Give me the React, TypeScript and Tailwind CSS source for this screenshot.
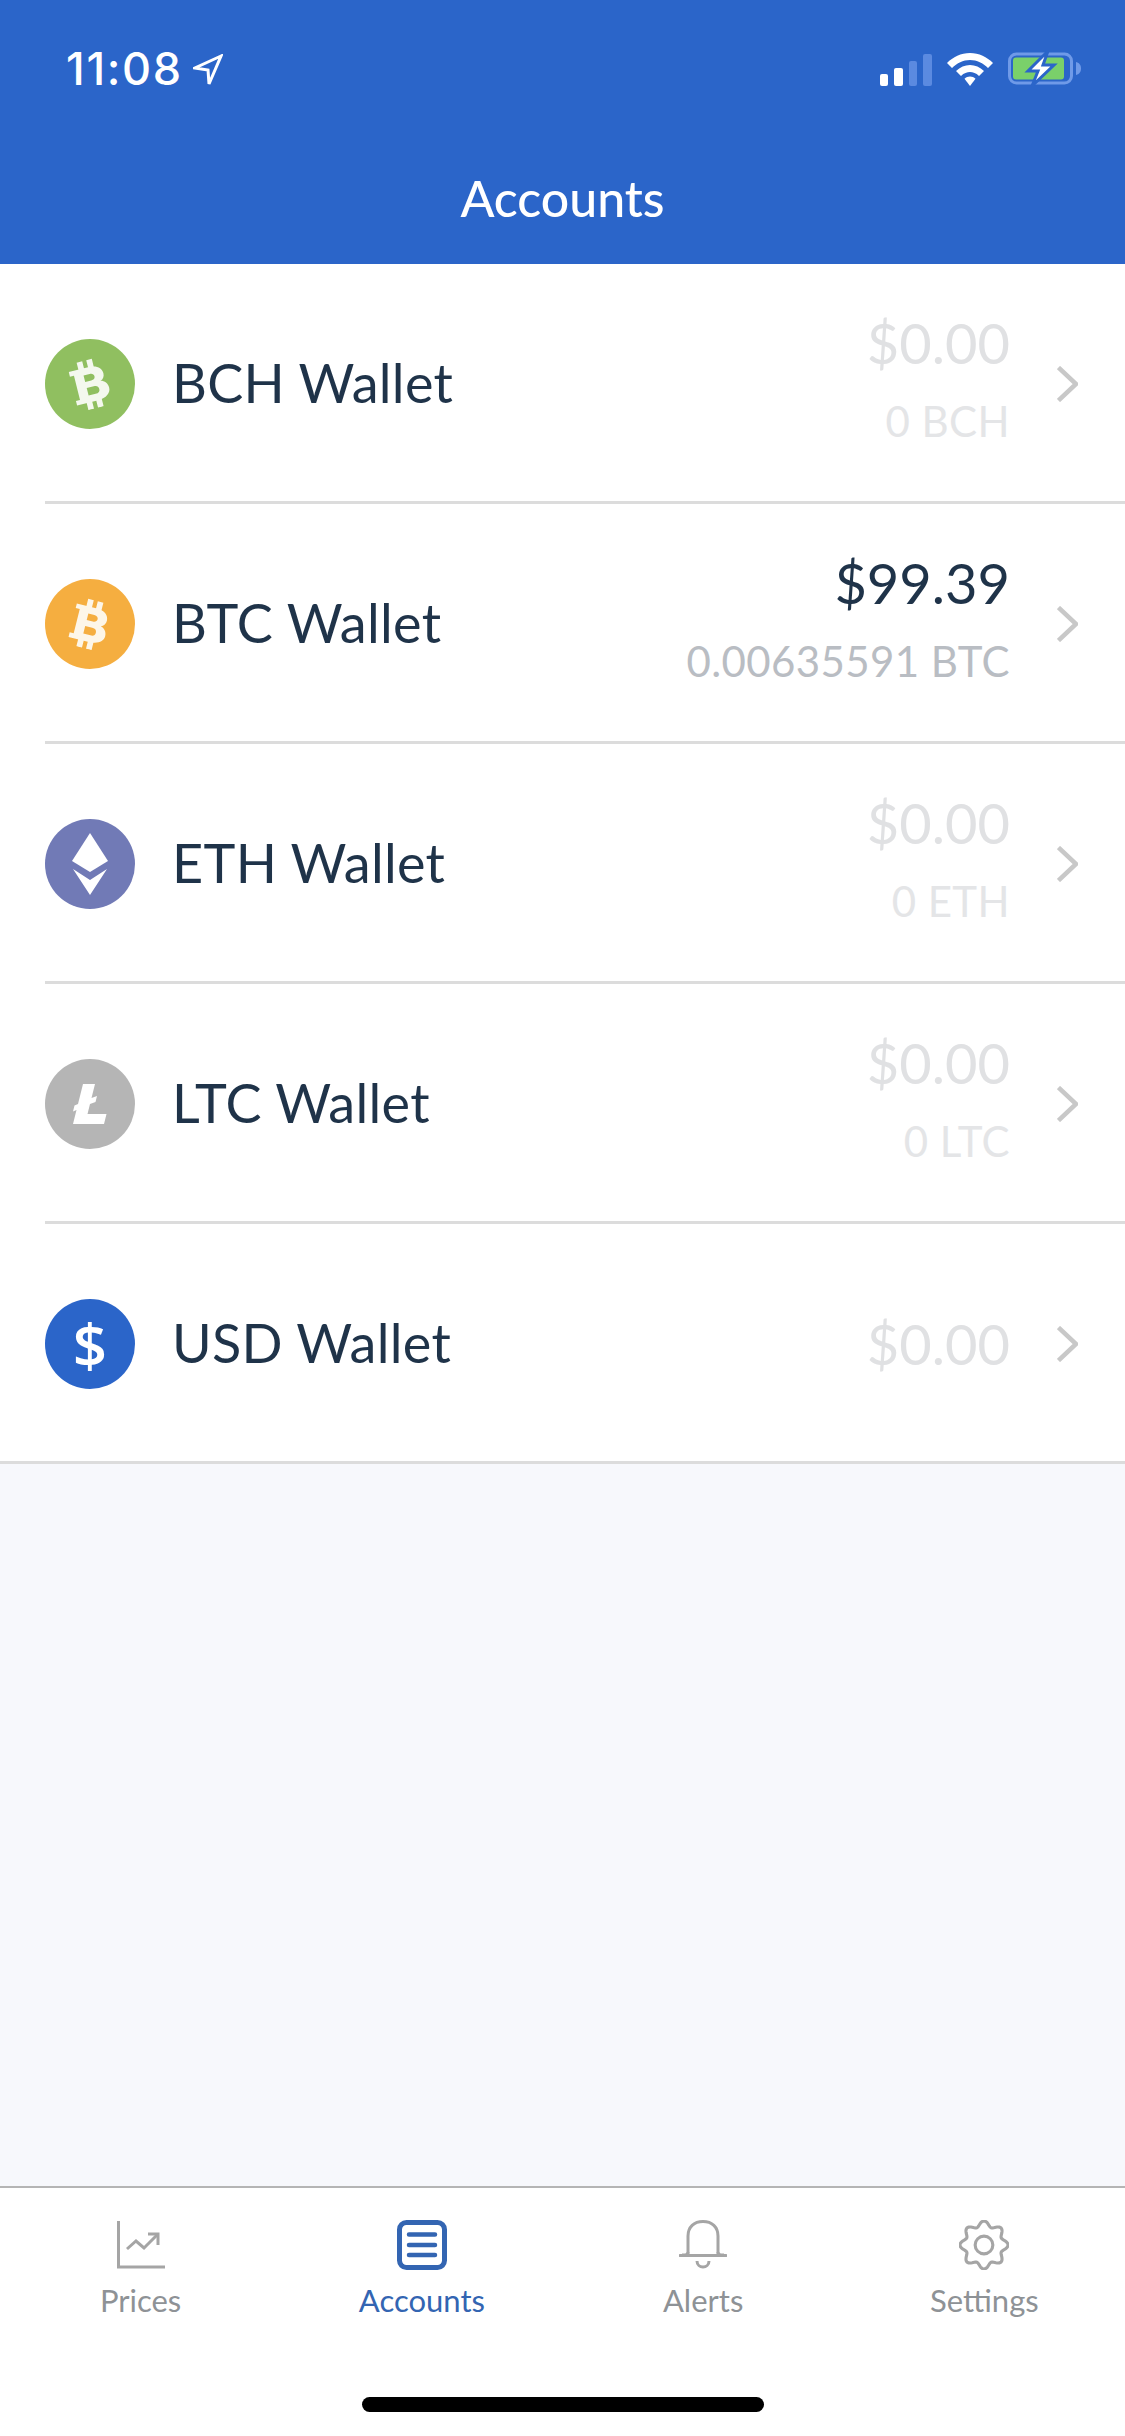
const gearPath = (() => {
  // scalloped outline with 8 lobes
  const pts: string[] = [];
  for (let i = 0; i < 160; i++) {
    const a = (i / 160) * Math.PI * 2;
    const r = 20.5 + 2.6 * Math.cos(8 * a);
    const x = 24 + r * Math.sin(a);
    const y = 24 - r * Math.cos(a);
    pts.push(`${i === 0 ? 'M' : 'L'}${x.toFixed(2)} ${y.toFixed(2)}`);
  }
  return pts.join(' ') + ' Z';
})();

const wallets = [
  { name: 'BCH Wallet', fiat: '$0.00', crypto: '0 BCH', color: 'bg-[#90bf60]', icon: 'bch', active: false },
  { name: 'BTC Wallet', fiat: '$99.39', crypto: '0.00635591 BTC', color: 'bg-[#f5ae40]', icon: 'btc', active: true },
  { name: 'ETH Wallet', fiat: '$0.00', crypto: '0 ETH', color: 'bg-[#717ab6]', icon: 'eth', active: false },
  { name: 'LTC Wallet', fiat: '$0.00', crypto: '0 LTC', color: 'bg-[#b5b5b5]', icon: 'ltc', active: false },
  { name: 'USD Wallet', fiat: '$0.00', crypto: '', color: 'bg-[#2b65c9]', icon: 'usd', active: false },
];

function BitcoinMark({ className }: { className: string }) {
  return (
    <svg className={className} width="38" height="50" viewBox="0 0 36 48" fill="currentColor">
      <path
        fillRule="evenodd"
        d="M1 8 H21 C28.500 8 33 12 33 17 C33 20 31.500 22.500 28.500 23.500 C32.500 24.500 35 27.500 35 32 C35 37 30 41 22 41 H1 V36.500 H5 V12.500 H1 Z M14 14.500 V21 H20 C22.500 21 24 19.800 24 17.800 C24 15.800 22.500 14.500 20 14.500 Z M14 27 V34.500 H21 C24 34.500 25.500 33.300 25.500 30.800 C25.500 28.300 24 27 21 27 Z"
      />
      <path d="M10.500 1 H16 V9 H10.500 Z M20 1 H25.500 V9 H20 Z M10.500 40 H16 V48 H10.500 Z M20 40 H25.500 V48 H20 Z" />
    </svg>
  );
}

function CoinIcon({ icon, color }: { icon: string; color: string }) {
  return (
    <div className={`w-[90px] h-[90px] rounded-full flex items-center justify-center shrink-0 text-white ${color}`}>
      {icon === 'bch' && <BitcoinMark className="-rotate-[14deg] text-[#f4f8ee]" />}
      {icon === 'btc' && <BitcoinMark className="rotate-[14deg] text-[#fdf6e8]" />}
      {icon === 'eth' && (
        <svg width="36" height="62" viewBox="0 0 36 62" fill="white">
          <path d="M18 0 L36 28 L18 39 L0 28 Z" />
          <path d="M1 36 L18 47 L35 36 L18 62 Z" />
        </svg>
      )}
      {icon === 'ltc' && (
        <svg width="34" height="40" viewBox="0 0 34 40" fill="white">
          <path d="M10 0 H22 L18.500 14 L24 12 L22.500 18 L17 20 L14.500 30 H33.500 L31 40 H0 L3.500 26 L0 27.500 L1.500 21.500 L5 20 Z" />
        </svg>
      )}
      {icon === 'usd' && <span className="text-[60px] leading-none font-semibold font-['Open_Sans',sans-serif]">$</span>}
    </div>
  );
}

function WalletRow({ wallet, last }: { wallet: (typeof wallets)[number]; last: boolean }) {
  return (
    <div className={`h-[240px] flex ${last ? '' : 'pl-[45px]'}`}>
      <div className={`flex-1 flex items-center border-b-[3px] border-[#dcdcdc] pt-[3px] pr-[47px] ${last ? 'pl-[45px]' : ''}`}>
        <CoinIcon icon={wallet.icon} color={wallet.color} />
        <div className="ml-[37px] mb-[3px] text-[54px] tracking-[0.3px] text-[#1f3349]">{wallet.name}</div>
        <div className={`ml-auto text-right ${wallet.crypto ? 'mb-[12px]' : ''}`}>
          <div className={`text-[56px] leading-[66px] ${wallet.active ? 'text-[#1f3349]' : 'text-[#e0e1e3]'}`}>{wallet.fiat}</div>
          {wallet.crypto && (
            <div className={`text-[42px] leading-[50px] mt-[20px] tracking-[0.4px] ${wallet.active ? 'text-[#b9bdc3]' : 'text-[#e4e5e7]'}`}>{wallet.crypto}</div>
          )}
        </div>
        <svg className="ml-[47px] shrink-0" width="21" height="36" viewBox="0 0 21 36" fill="none" stroke="#c8c8c8" strokeWidth="4.500">
          <path d="M1.500 1.500 L19 18 L1.500 34.500" />
        </svg>
      </div>
    </div>
  );
}

function StatusBar() {
  return (
    <div className="flex items-center justify-between h-[35px] pl-[66px] pr-[44px]">
      <div className="flex items-center">
        <span className="font-['Inter',sans-serif] font-medium text-[45px] leading-none tracking-[1.7px] text-white">11:08</span>
        <svg className="ml-[10px] mt-[3px]" width="30" height="32" viewBox="0 0 30 32" fill="none" stroke="white" strokeWidth="3" strokeLinejoin="miter">
          <path d="M28 2 L2 14 L15 16 L16 30 Z" />
        </svg>
      </div>
      <div className="flex items-end">
        <div className="flex items-end gap-[6px] h-[33px]">
          <div className="w-[8px] h-[12px] rounded-[2px] bg-white" />
          <div className="w-[9px] h-[18px] rounded-[2px] bg-white" />
          <div className="w-[8px] h-[25px] rounded-[2px] bg-[#5b8ae0]" />
          <div className="w-[9px] h-[32px] rounded-[2px] bg-[#5b8ae0]" />
        </div>
        <svg className="ml-[15px]" width="46" height="33" viewBox="0 0 46 33" fill="white">
          <path d="M23 0 C32 0 40 4 46 10 L41 15 C36 10 30 7 23 7 C16 7 10 10 5 15 L0 10 C6 4 14 0 23 0 Z" />
          <path d="M23 12 C28 12 33 14 37 18 L32 23 C29 20 26 19 23 19 C20 19 17 20 14 23 L9 18 C13 14 18 12 23 12 Z" />
          <path d="M23 23.500 C25 23.500 27 24.300 28.500 25.800 L23 33 L17.500 25.800 C19 24.300 21 23.500 23 23.500 Z" />
        </svg>
        <svg className="ml-[15px]" width="73" height="35" viewBox="0 0 73 35">
          <rect x="1.500" y="3" width="62" height="29" rx="7" fill="none" stroke="#6f9ae8" strokeWidth="3" />
          <rect x="5" y="6.500" width="51" height="22" rx="3" fill="#7ad06a" />
          <path d="M68 11 C72 12 73 15 73 17.500 C73 20 72 23 68 24 Z" fill="#6f9ae8" />
          <path d="M40 0 L20 20 H30 L24 35 L46 14 H35 Z" fill="white" stroke="#2b65c9" strokeWidth="3" />
        </svg>
      </div>
    </div>
  );
}

function TabItem({ label, active, children }: { label: string; active?: boolean; children: React.ReactNode }) {
  return (
    <div className="flex flex-col items-center">
      <div className="h-[50px] flex items-center justify-center">{children}</div>
      <span className={`mt-[10px] text-[31px] leading-[40px] ${active ? 'text-[#3365b2]' : 'text-[#8e9296]'}`}>{label}</span>
    </div>
  );
}

export default function App() {
  return (
    <div className="w-[1125px] h-[2436px] flex flex-col bg-[#f7f8fc] font-['Lato',sans-serif] overflow-hidden">
      {/* Header */}
      <div className="h-[264px] bg-[#2b65c9] pt-[51px]">
        <StatusBar />
        <div className="mt-[84px] text-center text-white text-[50px] leading-[56px] font-medium">Accounts</div>
      </div>

      {/* Wallet list */}
      <div className="bg-white">
        {wallets.map((w, i) => (
          <WalletRow key={w.name} wallet={w} last={i === wallets.length - 1} />
        ))}
      </div>

      <div className="flex-1" />

      {/* Tab bar */}
      <div className="h-[250px] bg-white border-t-2 border-[#b5b5b5] flex flex-col">
        <div className="grid grid-cols-4 pt-[32px]">
          <TabItem label="Prices">
            <svg width="48" height="48" viewBox="0 0 48 48" fill="none" stroke="#a5a5a5" strokeWidth="3">
              <path d="M1.500 0 V46 H48" />
              <path d="M10 28 L19 20 L27 27 L41 13" />
              <path d="M31 13 H41 V24" />
            </svg>
          </TabItem>
          <TabItem label="Accounts" active>
            <svg width="50" height="50" viewBox="0 0 50 50" fill="none" stroke="#3365b2">
              <rect x="2.500" y="2.500" width="45" height="45" rx="7" strokeWidth="5" />
              <path d="M12 14.500 H38 M12 25 H38 M12 35 H38" strokeWidth="4.500" strokeLinecap="round" />
            </svg>
          </TabItem>
          <TabItem label="Alerts">
            <svg width="48" height="50" viewBox="0 0 48 50" fill="none" stroke="#a5a5a5" strokeWidth="3">
              <path d="M9 35 V16 C9 7 15 1.500 24 1.500 C33 1.500 39 7 39 16 V35" />
              <path d="M3 35 C7 35 9 35 9 32 M45 35 C41 35 39 35 39 32" />
              <path d="M1 35.500 H47" strokeLinecap="round" />
              <path d="M18 41 C18 49 30 49 30 41" />
            </svg>
          </TabItem>
          <TabItem label="Settings">
            <svg width="50" height="50" viewBox="0 0 48 48" fill="none" stroke="#a5a5a5" strokeWidth="3">
              <path d={gearPath} />
              <circle cx="24" cy="24" r="8.500" />
            </svg>
          </TabItem>
        </div>
        <div className="mt-auto mb-[24px] mx-auto w-[402px] h-[15px] rounded-full bg-black" />
      </div>
    </div>
  );
}
